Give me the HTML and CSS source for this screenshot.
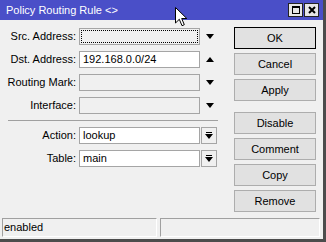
FILE: index.html
```html
<!DOCTYPE html>
<html lang="en">
<head>
    <meta charset="UTF-8">
    <title>Policy Routing Rule</title>
    <link rel="stylesheet" href="styles.css">
</head>
<body>

    <div class="window">
        <!-- Title bar -->
        <div class="titlebar">
            <span class="title">Policy Routing Rule &lt;&gt;</span>
            <div class="tb-buttons">
                <span class="tb-btn"><span class="max-glyph"></span></span>
                <span class="tb-btn">
                    <svg width="8" height="8" viewBox="0 0 8 8"><path d="M1 1 L7 7 M7 1 L1 7" stroke="#000" stroke-width="2"/></svg>
                </span>
            </div>
            <svg class="cursor" width="13" height="20" viewBox="0 0 13 20">
                <path d="M0.5 0.5 L0.5 16 L4.3 12.3 L7 18.7 L9.3 17.7 L6.7 11.5 L11.8 11.5 Z" fill="#fff" stroke="#000" stroke-width="1"/>
            </svg>
        </div>

        <div class="content">
            <!-- Form -->
            <div class="form">
                <div class="row">
                    <label>Src. Address:</label>
                    <div class="field gray focus"><span class="focus-ring"></span></div>
                    <span class="arrow"><svg width="8" height="5" viewBox="0 0 8 5"><path d="M0 0 H8 L4 5 Z" fill="#000"/></svg></span>
                </div>
                <div class="row">
                    <label>Dst. Address:</label>
                    <div class="field">192.168.0.0/24</div>
                    <span class="arrow"><svg width="8" height="5" viewBox="0 0 8 5"><path d="M0 5 H8 L4 0 Z" fill="#000"/></svg></span>
                </div>
                <div class="row">
                    <label>Routing Mark:</label>
                    <div class="field gray"></div>
                    <span class="arrow"><svg width="8" height="5" viewBox="0 0 8 5"><path d="M0 0 H8 L4 5 Z" fill="#000"/></svg></span>
                </div>
                <div class="row">
                    <label>Interface:</label>
                    <div class="field gray"></div>
                    <span class="arrow"><svg width="8" height="5" viewBox="0 0 8 5"><path d="M0 0 H8 L4 5 Z" fill="#000"/></svg></span>
                </div>

                <div class="sep"></div>

                <div class="row">
                    <label>Action:</label>
                    <div class="field">lookup</div>
                    <span class="dd"><svg width="8" height="7" viewBox="0 0 8 7"><path d="M1 0 H7 V1 H1 Z M0 2 H8 L4 7 Z" fill="#000"/></svg></span>
                </div>
                <div class="row">
                    <label>Table:</label>
                    <div class="field">main</div>
                    <span class="dd"><svg width="8" height="7" viewBox="0 0 8 7"><path d="M1 0 H7 V1 H1 Z M0 2 H8 L4 7 Z" fill="#000"/></svg></span>
                </div>
            </div>

            <!-- Buttons -->
            <div class="buttons">
                <button class="default">OK</button>
                <button>Cancel</button>
                <button>Apply</button>
                <button class="group">Disable</button>
                <button>Comment</button>
                <button>Copy</button>
                <button>Remove</button>
            </div>
        </div>

        <!-- Status bar -->
        <div class="status">
            <div class="panel first">enabled</div>
            <div class="panel"></div>
        </div>
    </div>

</body>
</html>
```

FILE: styles.css
```css
body {
    margin: 0;
    font-family: "Liberation Sans", Arial, sans-serif;
    font-size: 11px;
    color: #000;
}
.window {
    position: relative;
    width: 326px;
    height: 242px;
    box-sizing: border-box;
    background: #f0f0f0;
    border-right: 3px solid #4c4c4c;
    border-bottom: 3px solid #4c4c4c;
    display: flex;
    flex-direction: column;
}
.titlebar {
    position: relative;
    height: 20px;
    background: #4a4fc8;
    color: white;
    display: flex;
    align-items: center;
    padding-left: 6px;
}
.title {
    font-size: 11px;
}
.tb-buttons {
    margin-left: auto;
    margin-right: 4px;
    display: flex;
    gap: 1px;
}
.tb-btn {
    width: 13px;
    height: 12px;
    background: #e6e6e6;
    border: 1px solid #222;
    display: flex;
    align-items: center;
    justify-content: center;
}
.max-glyph {
    width: 6px;
    height: 5px;
    border: 1px solid #000;
    border-top-width: 2px;
}
.cursor {
    position: absolute;
    left: 175px;
    top: 7px;
}
.content {
    flex: 1;
    display: flex;
    padding-top: 7px;
}
.form {
    padding-top: 1px;
}
.row {
    display: flex;
    height: 17px;
    margin-bottom: 6px;
}
.row label {
    width: 76px;
    margin-right: 3px;
    text-align: right;
    line-height: 17px;
}
.field {
    width: 121px;
    height: 17px;
    box-sizing: border-box;
    border: 1px solid #a5a5a5;
    background: white;
    padding-left: 3px;
    line-height: 15px;
    font-size: 11px;
}
.field.gray {
    background: #f0f0f0;
}
.field.focus {
    padding: 1px;
}
.focus-ring {
    display: block;
    height: 100%;
    box-sizing: border-box;
    border: 1px dotted #000;
}
.arrow {
    width: 18px;
    margin-left: 1px;
    display: flex;
    align-items: center;
    justify-content: center;
}
.dd {
    width: 16px;
    height: 17px;
    margin-left: 1px;
    box-sizing: border-box;
    border: 1px solid #a5a5a5;
    background: #f0f0f0;
    display: flex;
    align-items: center;
    justify-content: center;
}
.sep {
    height: 1px;
    width: 210px;
    background: #a0a0a0;
    margin: 1px 0 6px 8px;
}
.buttons {
    margin-left: auto;
    margin-right: 7px;
    width: 82px;
    display: flex;
    flex-direction: column;
}
button {
    height: 22px;
    margin-bottom: 4px;
    padding: 0;
    border: 1px solid #adadad;
    background: #e1e1e1;
    font-family: "Liberation Sans", Arial, sans-serif;
    font-size: 11px;
    color: #000;
}
button.default {
    border-color: #000;
}
button.group {
    margin-top: 7px;
}
.status {
    height: 19px;
    margin: 0 3px 2px 2px;
    display: flex;
    gap: 3px;
}
.panel {
    flex: 1;
    box-sizing: border-box;
    border: 1px solid;
    border-color: #a0a0a0 #fff #fff #a0a0a0;
    padding-left: 1px;
    line-height: 17px;
    font-size: 11px;
}
.panel.first {
    flex: none;
    width: 155px;
}
```
